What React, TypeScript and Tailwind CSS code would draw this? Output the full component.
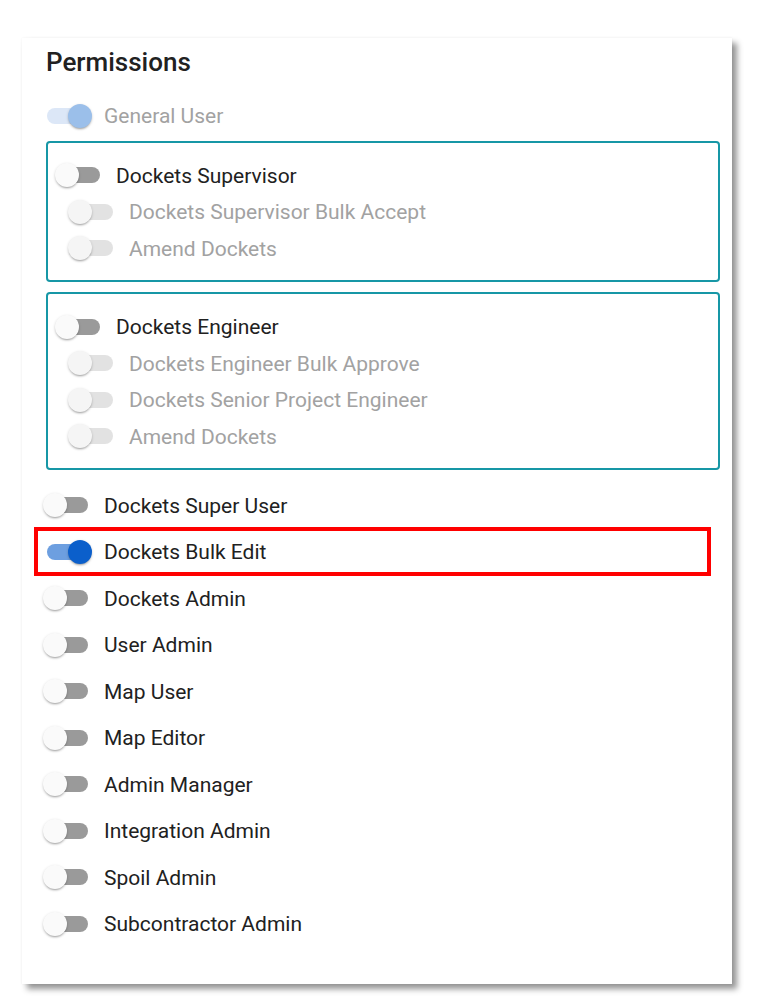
import React from "react"

type SwitchProps = { on?: boolean; disabled?: boolean }

function Switch({ on = false, disabled = false }: SwitchProps) {
  let track = "bg-[#9a9a9a]"
  let thumb = "bg-[#fafafa]"
  if (on && disabled) {
    track = "bg-[#dce7f7]"
    thumb = "bg-[#9bbfea]"
  } else if (on) {
    track = "bg-[#6d9fe0]"
    thumb = "bg-[#0b5fcb]"
  } else if (disabled) {
    track = "bg-[#e2e2e2]"
    thumb = "bg-[#f5f5f5]"
  }
  return (
    <div className="relative w-[50px] h-[24px] shrink-0">
      <div className={`absolute left-[4px] right-[5px] top-[4px] h-[16px] rounded-full ${track}`} />
      <div
        className={`absolute top-0 w-[24px] h-[24px] rounded-full shadow-[0_2px_2px_-1px_rgba(0,0,0,0.25),0_1px_3px_rgba(0,0,0,0.18)] ${thumb} ${
          on ? "left-[25px]" : "left-0"
        }`}
      />
    </div>
  )
}

function Row({ label, on, disabled, small }: { label: string; on?: boolean; disabled?: boolean; small?: boolean }) {
  return (
    <div className={`flex items-center gap-[11px] ${small ? "h-[36.5px]" : "h-[46.5px]"}`}>
      <Switch on={on} disabled={disabled} />
      <span className={`text-[21px] leading-none translate-y-[1px] ${disabled ? "text-[#a2a2a2]" : "text-[#212121]"}`}>
        {label}
      </span>
    </div>
  )
}

function Group({ title, items }: { title: string; items: string[] }) {
  return (
    <div className="border-2 border-[#1797a6] rounded-[4px] pt-[14px] pb-[14px] pl-[7px]">
      <Row label={title} small />
      <div className="pl-[13px]">
        {items.map((i) => (
          <Row key={i} label={i} disabled small />
        ))}
      </div>
    </div>
  )
}

const mainRows = [
  "Dockets Admin",
  "User Admin",
  "Map User",
  "Map Editor",
  "Admin Manager",
  "Integration Admin",
  "Spoil Admin",
  "Subcontractor Admin",
]

export default function App() {
  return (
    <div className="min-h-screen bg-white pt-[38px] pl-[22px]" style={{ fontFamily: "Roboto, 'Liberation Sans', sans-serif" }}>
      <div className="w-[710px] h-[946px] bg-white pt-[10px] pl-[24px] pr-[12px] shadow-[5px_5px_6px_rgba(0,0,0,0.42),0_0_2px_rgba(0,0,0,0.06)]">
        <h2 className="text-[26px] leading-[1.15] font-medium text-[#212121]">Permissions</h2>

        <div className="mt-[14.5px] -ml-[3px]">
          <Row label="General User" on disabled />
        </div>

        <div className="mt-[2px] flex flex-col gap-[10px]">
          <Group title="Dockets Supervisor" items={["Dockets Supervisor Bulk Accept", "Amend Dockets"]} />
          <Group
            title="Dockets Engineer"
            items={["Dockets Engineer Bulk Approve", "Dockets Senior Project Engineer", "Amend Dockets"]}
          />
        </div>

        <div className="mt-[11.5px] -ml-[3px]">
          <Row label="Dockets Super User" />
          <div className="relative">
            <Row label="Dockets Bulk Edit" on />
            <div className="absolute -left-[9px] right-[9px] -top-[1px] -bottom-[1px] border-4 border-[#ff0000]" />
          </div>
          {mainRows.map((r) => (
            <Row key={r} label={r} />
          ))}
        </div>
      </div>
    </div>
  )
}
